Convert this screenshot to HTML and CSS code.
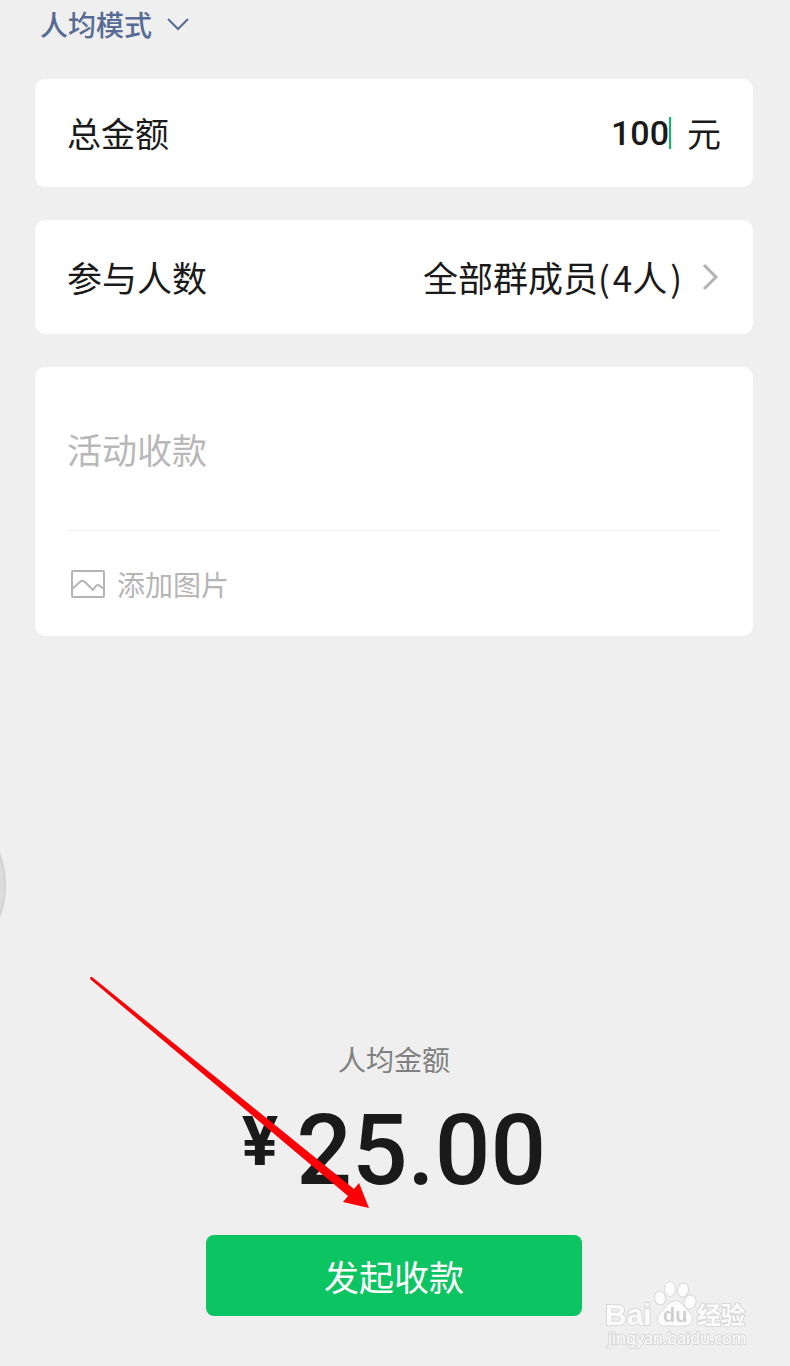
FILE: index.html
```html
<!DOCTYPE html>
<html lang="zh-CN">
<head>
  <meta charset="UTF-8">
  <meta name="viewport" content="width=device-width, initial-scale=1">
  <title>群收款</title>
  <link rel="stylesheet" href="styles.css">
</head>
<body>
  <form class="page">
    <!-- Mode switch -->
    <div class="mode">
      <select class="mode-select" aria-label="收款模式">
        <option>人均模式</option>
      </select>
      <svg class="mode-arrow" width="22" height="14" viewBox="0 0 22 14" aria-hidden="true">
        <path d="M1 2L11 12L21 2" />
      </svg>
    </div>

    <!-- Total amount -->
    <div class="card row row-total">
      <label for="total">总金额</label>
      <input class="total-input" type="text" id="total" inputmode="decimal" value="100">
      <span class="caret"></span>
      <span class="unit">元</span>
    </div>

    <!-- Participants -->
    <button type="button" class="card row row-members">
      <span>参与人数</span>
      <span class="members">全部群成员(<span class="count">4人</span>)</span>
      <svg class="members-arrow" width="16" height="28" viewBox="0 0 16 28" aria-hidden="true">
        <path d="M2 2L14 14L2 26" />
      </svg>
    </button>

    <!-- Note and picture -->
    <div class="card note">
      <textarea class="note-input" rows="1" aria-label="活动收款" placeholder="活动收款"></textarea>
      <button type="button" class="add-image">
        <svg width="36" height="30" viewBox="0 0 36 30" aria-hidden="true">
          <rect x="2" y="2" width="32" height="26" rx="1" />
          <path d="M2 20L11 12Q13 11 15 13L23 21L26 17Q28 15 30 17L34 20" />
        </svg>
        添加图片
      </button>
    </div>

    <!-- Amount per person -->
    <div class="summary">
      <p class="summary-label">人均金额</p>
      <p class="amount"><span class="currency">¥</span><span>25.00</span></p>
      <button type="submit" class="submit">发起收款</button>
      <svg class="pointer" width="282" height="234" viewBox="0 0 282 234" aria-hidden="true">
        <path d="M4 1L266 213L271 207L281 232L255 226L260 220L2 3Q2 0 4 1Z" />
      </svg>
    </div>
  </form>

  <div class="bubble"></div>

  <svg class="watermark" width="155" height="80" viewBox="0 0 155 80">
    <text class="wm-bai" x="5" y="50">Bai</text>
    <ellipse cx="60" cy="23" rx="5.5" ry="7" transform="rotate(-10 60 23)" />
    <ellipse cx="70" cy="14" rx="5.5" ry="7.5" />
    <ellipse cx="83" cy="15" rx="5.5" ry="7" transform="rotate(10 83 15)" />
    <ellipse cx="90" cy="27" rx="6" ry="7" transform="rotate(15 90 27)" />
    <path d="M74 26C81 25 84 31 88 36C95 41 93 51 85 51C79 52 70 50 65 51C57 52 55 42 61 37C66 33 67 27 74 26Z" />
    <text class="wm-du" x="63" y="47">du</text>
    <text class="wm-exp" x="97" y="49">经验</text>
    <text class="wm-url" x="8" y="69">jingyan.baidu.com</text>
  </svg>
</body>
</html>
```

FILE: styles.css
```css
* {
  box-sizing: border-box;
}
body {
  margin: 0;
  background: #efefef;
  color: #1a1a1a;
  font-family: "Noto Sans CJK SC", sans-serif;
  font-size: 34px;
  line-height: 48px;
}
button,
input,
select,
textarea {
  margin: 0;
  padding: 0;
  border: none;
  outline: none;
  background: none;
  color: inherit;
  font: inherit;
}
button {
  cursor: pointer;
}
svg {
  fill: none;
}
.page {
  display: flex;
  flex-direction: column;
  min-height: 100vh;
  padding: 3px 37px 50px 35px;
}

/* Mode switch */
.mode {
  display: flex;
  align-items: center;
  gap: 14px;
  height: 42px;
  margin-bottom: 34px;
  padding-left: 5px;
  color: #576b95;
}
.mode-select {
  appearance: none;
  font-size: 28px;
  font-weight: 500;
  line-height: 42px;
}
.mode-arrow {
  stroke: #576b95;
  stroke-width: 2;
}

/* Cards */
.card {
  margin-bottom: 33px;
  padding: 0 32px;
  border-radius: 10px;
  background: #fff;
}
.row {
  display: flex;
  align-items: center;
  text-align: left;
}
.row-total {
  min-height: 108px;
}
.total-input {
  flex: 1;
  min-width: 0;
  font-family: Roboto, sans-serif;
  font-size: 34px;
  font-weight: 500;
  text-align: right;
}
.caret {
  width: 2px;
  height: 32px;
  background: #07c160;
}
.unit {
  margin-left: 16px;
}
.row-members {
  min-height: 114px;
  font-size: 35px;
}
.members {
  margin-left: auto;
}
.count {
  margin: 0 3px;
}
.members-arrow {
  margin: 0 3px 0 20px;
  stroke: #b2b2b2;
  stroke-width: 3;
}

/* Note and picture */
.note {
  color: #b5b5b5;
}
.note-input {
  display: block;
  width: 100%;
  height: 164px;
  padding: 58px 0;
  border-bottom: 1px solid #f0f0f0;
  font-size: 35px;
  resize: none;
}
.note-input::placeholder {
  color: #b8b8b8;
}
.add-image {
  display: flex;
  align-items: center;
  gap: 11px;
  height: 105px;
  padding-left: 3px;
  font-size: 28px;
}
.add-image svg {
  stroke: #b5b5b5;
  stroke-width: 2;
}

/* Amount per person */
.summary {
  position: relative;
  width: 376px;
  margin: auto auto 0;
  text-align: center;
}
.summary-label {
  margin: 0;
  color: #808080;
  font-size: 28px;
}
.amount {
  display: flex;
  justify-content: center;
  gap: 18px;
  margin: 14px 0 30px;
  font-family: Roboto, sans-serif;
  font-size: 98px;
  font-weight: 500;
  line-height: 108px;
}
.currency {
  font-size: 68px;
  font-weight: 700;
  line-height: 90px;
}
.submit {
  display: block;
  width: 100%;
  height: 81px;
  border-radius: 8px;
  background: #0dc463;
  color: #fff;
  font-size: 35px;
}
/* Arrow that points at the submit button */
.pointer {
  position: absolute;
  right: 212px;
  bottom: 106px;
  fill: #fb0007;
}

/* Edge of the floating ball */
.bubble {
  position: fixed;
  top: 791px;
  left: -182px;
  width: 188px;
  height: 188px;
  border: 2px solid #d2d2d2;
  border-radius: 50%;
  background: #dcdcdc;
}

/* Watermark */
.watermark {
  position: fixed;
  right: 35px;
  bottom: 11px;
  fill: #fcfcfc;
  stroke: #d8d8d8;
  stroke-width: 1;
}
.watermark text {
  paint-order: stroke;
  stroke-width: 2;
}
.wm-bai {
  font: 700 30px "Liberation Sans", sans-serif;
}
.watermark .wm-du {
  fill: #d0d0d0;
  stroke: none;
  font: 700 20px "Liberation Sans", sans-serif;
}
.wm-exp {
  font: 700 24px "Noto Sans CJK SC", sans-serif;
}
.wm-url {
  font: 400 16px "Noto Sans", sans-serif;
}
```
